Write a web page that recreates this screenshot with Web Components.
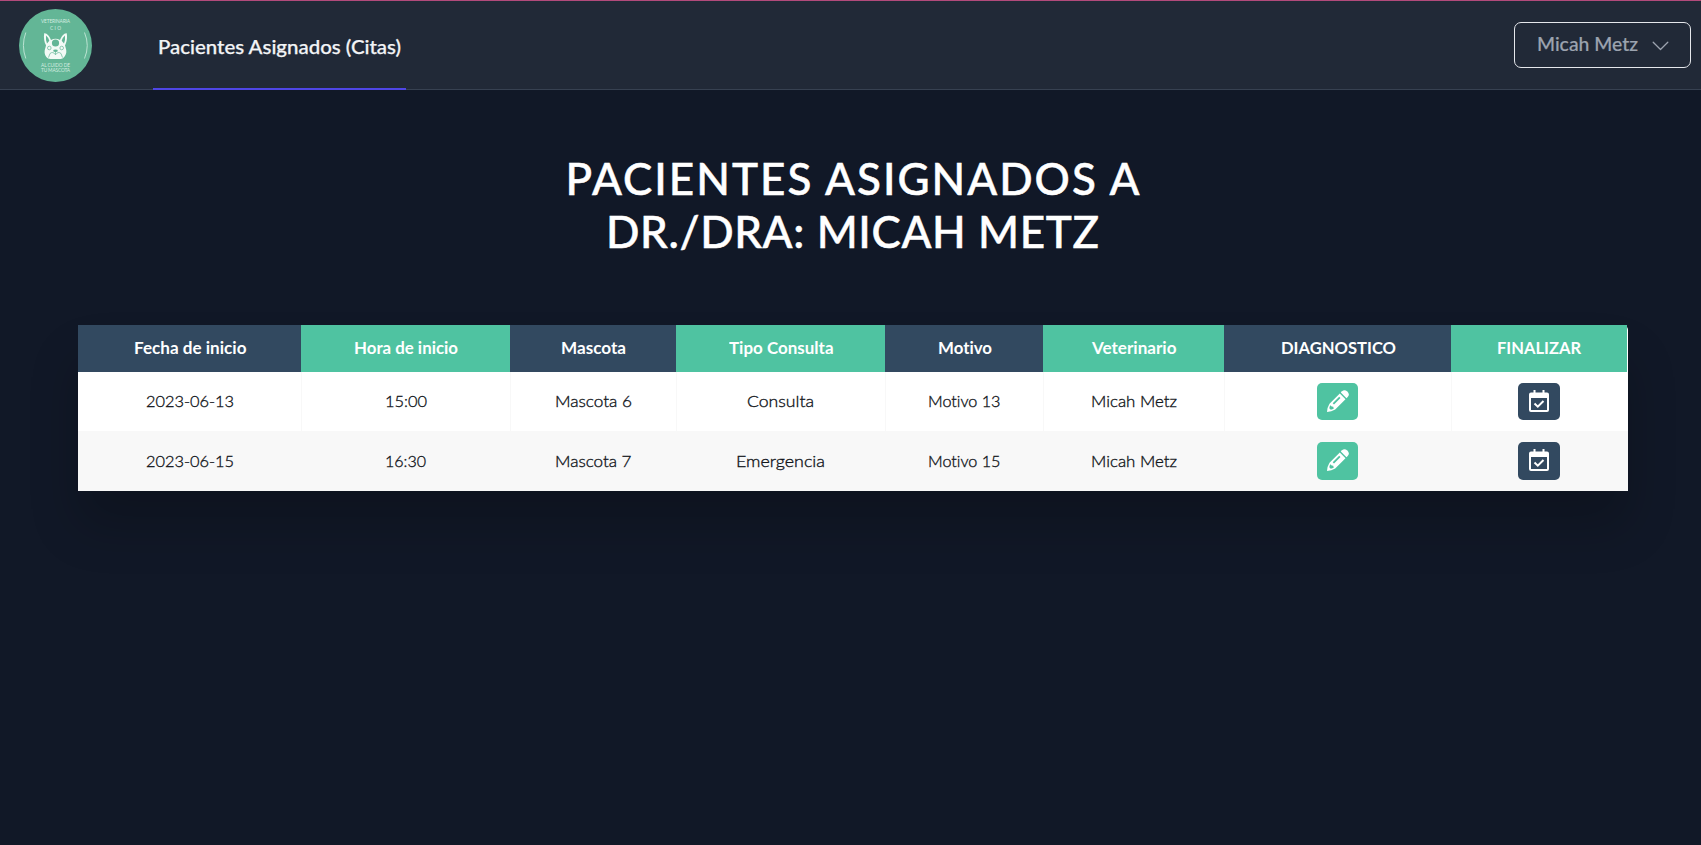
<!DOCTYPE html>
<html lang="es">
<head>
<meta charset="utf-8">
<title>Pacientes Asignados</title>
<style>
html,body{margin:0;background:#111827;}
body{font-family:Lato,"Open Sans",sans-serif;font-variant-ligatures:none;min-height:845px;overflow:hidden}
</style>
</head>
<body>
<vet-app></vet-app>
<script>
const define=(name,html,init)=>customElements.define(name,class extends HTMLElement{
  constructor(){super();const t=document.createElement('template');t.innerHTML=html;
    this.attachShadow({mode:'open'}).append(t.content.cloneNode(true));}
  connectedCallback(){if(init)init.call(this,this.shadowRoot);}
});

/* Makes its text span the given width: tracked, or widened with the "stretch" attribute. */
define('fit-text',`<style>:host{display:inline-block;white-space:nowrap}span{display:inline-block;transform-origin:0 50%}</style><span></span>`,function(r){
  const s=r.querySelector('span'),t=this.getAttribute('text'),w=+this.getAttribute('w');
  s.textContent=t;
  const n=s.getBoundingClientRect().width;
  if(this.hasAttribute('stretch')){
    s.style.transform='scaleX('+w/n+')';s.style.marginRight=(w-n)+'px';
  }else{
    const d=(w-n)/(t.length-1);
    s.style.letterSpacing=d+'px';s.style.marginRight=-d+'px';
  }
});

define('vet-logo',`<style>:host{display:block;width:73px;height:73px}svg{display:block}text{font-family:Lato,sans-serif;fill:#d3ede0;text-anchor:middle}</style>
<svg width="73" height="73" viewBox="0 0 73 73">
<circle cx="36.5" cy="36.5" r="36.5" fill="#63b696"/>
<g fill="none" stroke="#c4e8d8" stroke-width=".9"><path d="M6.8 23.5Q2 36.500 6.800 49.500"/><path d="M65.500 23.500Q71 36.500 65.500 49.500"/></g>
<text x="36.500" y="13.500" font-size="4.800" textLength="29">VETERINARIA</text>
<text x="36.500" y="21" font-size="4.800" textLength="11">CIO</text>
<path fill="#f3faf6" d="M25.200 24.200C27.500 23.600 30.600 27 32 31Q36.500 28.600 41 31C42.500 27 45.500 23.600 47.700 24.200C48.600 28.500 47.600 33.500 46 36.200C46.500 39 47.600 40 47.300 43.500C46.500 47 44.500 49.900 41.500 49.900L31.500 49.900C28 49.900 26 47 25.600 43.500C25.400 40 26.700 39 27 36.200C25.200 33.500 24.500 28.500 25.200 24.200Z"/>
<g fill="#63b696"><path d="M27 26.500Q29.500 28.500 30.300 31.800L28 34.500Q26.500 30.500 27 26.500ZM46 26.500Q43.500 28.500 42.700 31.800L45 34.500Q46.500 30.500 46 26.500Z"/><circle cx="36.500" cy="34" r="3.600"/><ellipse cx="36.500" cy="41.800" rx="2.300" ry="1.300"/></g>
<g fill="none" stroke="#63b696" stroke-width=".7"><circle cx="30.300" cy="39" r="1.800"/><circle cx="42.700" cy="39" r="1.800"/><path d="M36.500 42v3.500M29.500 48.500L31 44.500Q34 42 36.500 45.800Q39 42 42 44.500L43.500 48.500"/></g>
<text x="36.500" y="58" font-size="4.800" textLength="29">AL CUIDO DE</text>
<text x="36.500" y="62.500" font-size="4.800" textLength="29">TU MASCOTA</text>
</svg>`);

define('nav-link',`<style>:host{display:flex;box-sizing:border-box;width:253px;height:90px;justify-content:center;padding-top:35px;border-bottom:2px solid #4f46e5;color:#f3f4f6;font-size:19.500px;line-height:24px;font-weight:500;-webkit-text-stroke:.25px}</style><slot></slot>`);

define('user-menu',`<style>:host{display:flex;box-sizing:border-box;width:177px;height:46px;border:1px solid #e5e7eb;border-radius:7px;padding:9px 21px 0 22px;justify-content:space-between;color:#9ca3af;font-size:19.500px;line-height:24px;font-weight:500;-webkit-text-stroke:.2px}svg{display:block;margin-top:9px}</style>
<slot></slot><svg width="17" height="10" viewBox="0 0 17 10" fill="none" stroke="#9ca3af" stroke-width="1.300" stroke-linecap="round" stroke-linejoin="round"><path d="M1.200 1.200L8.500 8.500L15.800 1.200"/></svg>`);

define('top-bar',`<style>:host{display:block}header{box-sizing:border-box;height:90px;display:flex;align-items:flex-start;background:linear-gradient(#b24a7b,#b24a7b) 0 0/100% 1px no-repeat,#212937;box-shadow:inset 0 -1px #374151;padding:0 10px 0 19px}
vet-logo{margin-top:9px}nav-link{margin-left:61px}user-menu{margin:22px 0 0 auto}</style>
<header><vet-logo></vet-logo><nav-link><fit-text stretch text="Pacientes Asignados (Citas)" w="243"></fit-text></nav-link><user-menu><fit-text stretch text="Micah Metz" w="101"></fit-text></user-menu></header>`);

define('page-title',`<style>:host{display:block}h1{margin:0;color:#fff;font-weight:500;font-size:44px;line-height:53px;display:flex;flex-direction:column;align-items:center;padding:0 1px 0 0;-webkit-text-stroke:.5px}</style>
<h1><fit-text text="PACIENTES ASIGNADOS A" w="574"></fit-text><fit-text text="DR./DRA: MICAH METZ" w="493"></fit-text></h1>`);

define('icon-button',`<style>:host{display:inline-flex;align-items:flex-start;justify-content:center;box-sizing:border-box;width:41px;height:37px;padding-top:7px;border-radius:5px;background:#4fc3a1}:host([kind=done]){width:42px;background:#324960}svg{display:block}</style><div></div>`,function(r){
  r.querySelector('div').innerHTML=this.getAttribute('kind')==='done'
  ?`<svg width="20" height="22" viewBox="0 0 20 22"><path fill="#fff" fill-rule="evenodd" d="M4.500 0h2v2.500h7V0h2v2.500H18a2 2 0 0 1 2 2V20a2 2 0 0 1-2 2H2a2 2 0 0 1-2-2V4.500a2 2 0 0 1 2-2h2.500ZM2 8v12h16V8Z"/><path d="M5.500 13.500l3.300 3.200L14.500 11" fill="none" stroke="#fff" stroke-width="2"/></svg>`
  :`<svg width="22" height="22" viewBox="0 0 22 22"><path fill="#fff" fill-rule="evenodd" d="M12.800 3.500L18.500 9.200L8.200 19.500Q4.500 21.800 0 22Q.200 17.500 2.500 13.800ZM12.200 6.700L5.700 13.200L7 14.500L13.500 8ZM3.300 15.300Q2.500 17 2.300 18.200L3.800 19.700Q5.500 19.400 6.700 18.700L6.300 16.800L4.700 16.500Z"/><path fill="#fff" d="M13.800 2.500L15 1.300Q17.500-1 20.300 1.600Q23.200 4.500 20.700 7L19.500 8.200Z"/></svg>`;
});

define('patients-table',`<style>
:host{display:block;position:relative}
.t{display:grid;width:1550px;grid-template-columns:223px 209px 166px 209px 158px 181px 227px 177px;grid-template-rows:47px 59px 60px;background:#fff;border-radius:0 5px 0 0;box-shadow:0 35px 50px rgba(0,0,0,.2);text-align:center}
.h{color:#fff;font-weight:700;font-size:16.400px;line-height:46px;padding-left:1px;background:#324960}
.h.g{background:#4fc3a1}.h.end{margin-right:1px;padding:0}
.c{color:#212529;font-size:16.500px;line-height:59px;box-shadow:inset 1px 0 #f8f8f8;font-weight:400}
.c.light{font-weight:300;color:#12161b;-webkit-text-stroke:.35px}
.c.first{box-shadow:none}.c.alt{background:#f8f8f8;line-height:61px}
.b{display:flex;justify-content:center;padding:11px 0 0;line-height:0}.b.wide{padding-right:1px}
.alt icon-button{height:38px}
</style><div class="t"></div>`,function(r){
  const heads=[['Fecha de inicio',112.5],['Hora de inicio',104],['Mascota',65],['Tipo Consulta',104.5],['Motivo',54],['Veterinario',84.5],['DIAGNOSTICO',115],['FINALIZAR',84]];
  const rows=[[['2023-06-13',88],['15:00',42],['Mascota 6',77],['Consulta',67],['Motivo 13',72.5],['Micah Metz',86]],
              [['2023-06-15',88],['16:30',41],['Mascota 7',76.5],['Emergencia',89],['Motivo 15',72.5],['Micah Metz',86]]];
  const f=([t,w])=>`<fit-text stretch text="${t}" w="${w}"></fit-text>`;
  let h=heads.map((x,i)=>`<div class="h ${i%2?'g':''} ${i==7?'end':''}">${f(x)}</div>`).join('');
  rows.forEach((row,k)=>{const a=k?'alt':'';
    h+=row.map((x,i)=>`<div class="c light ${a} ${i?'':'first'}">${f(x)}</div>`).join('');
    h+=`<div class="c b ${a}"><icon-button kind="edit"></icon-button></div><div class="c b wide ${a}"><icon-button kind="done"></icon-button></div>`;});
  r.querySelector('.t').innerHTML=h;
});

define('vet-app',`<style>:host{display:block}main{padding:62px 73px 0 78px}page-title{margin-bottom:67px}</style>
<top-bar></top-bar><main><page-title></page-title><patients-table></patients-table></main>`);
</script>
</body>
</html>
